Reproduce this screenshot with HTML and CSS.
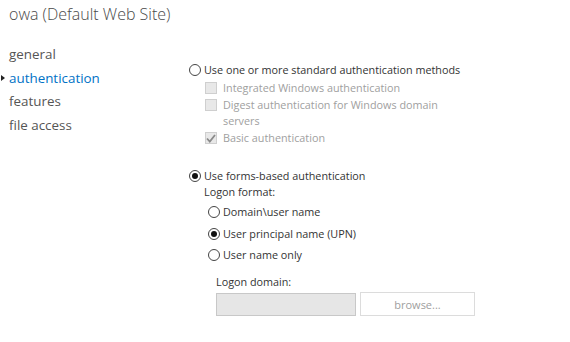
FILE: index.html
```html
<!DOCTYPE html>
<html lang="en">
<head>
    <meta charset="UTF-8">
    <title>owa (Default Web Site)</title>
    <link rel="stylesheet" href="styles.css">
</head>
<body>
    <h1 class="title">owa (Default Web Site)</h1>
    <main class="page">
        <nav class="menu">
            <a class="menu-item">general</a>
            <a class="menu-item menu-item--active">authentication</a>
            <a class="menu-item">features</a>
            <a class="menu-item">file access</a>
        </nav>
        <section class="auth">
            <div class="option">
                <span class="radio"></span>
                <span>Use one or more standard authentication methods</span>
            </div>
            <div class="checks">
                <div class="check-row">
                    <span class="box"></span>
                    <span>Integrated Windows authentication</span>
                </div>
                <div class="check-row">
                    <span class="box"></span>
                    <span>Digest authentication for Windows domain<br>servers</span>
                </div>
                <div class="check-row">
                    <span class="box box--checked">
                        <svg width="10" height="9" viewBox="0 0 10 9"><path d="M1 4.5 L3.8 7.5 L9 1" fill="none" stroke="#8a8a8a" stroke-width="1.8"/></svg>
                    </span>
                    <span>Basic authentication</span>
                </div>
            </div>

            <div class="option option--forms">
                <span class="radio radio--on"></span>
                <span>Use forms-based authentication</span>
            </div>
            <div class="forms">
                <p class="label">Logon format:</p>
                <div class="format-list">
                    <div class="option">
                        <span class="radio"></span>
                        <span>Domain\user name</span>
                    </div>
                    <div class="option">
                        <span class="radio radio--on"></span>
                        <span>User principal name (UPN)</span>
                    </div>
                    <div class="option">
                        <span class="radio"></span>
                        <span>User name only</span>
                    </div>
                </div>
                <div class="domain">
                    <p class="label">Logon domain:</p>
                    <div class="domain-row">
                        <input class="domain-input" type="text" disabled>
                        <button class="browse" disabled>browse...</button>
                    </div>
                </div>
            </div>
        </section>
    </main>
</body>
</html>
```

FILE: styles.css
```css
body{
    margin:0;
    background-color: #fff;
    font-family: "Open Sans", "Noto Sans", sans-serif;
    color: #333;
}
.title{
    margin: 0;
    padding: 2px 0 0 9px;
    font-size: 16px;
    font-weight: 300;
    color: #4a4a4a;
    line-height: 24px;
}
.page{
    display: flex;
    margin-top: 17px;
}
.menu{
    display: flex;
    flex-direction: column;
    width: 189px;
    padding-left: 9px;
    box-sizing: border-box;
}
.menu-item{
    font-size: 13.4px;
    line-height: 23.6px;
    color: #555;
    position: relative;
}
.menu-item--active{
    color: #0072c6;
}
.menu-item--active::before{
    content: "";
    position: absolute;
    left: -8px;
    top: 8px;
    border-left: 4px solid #222;
    border-top: 3.5px solid transparent;
    border-bottom: 3.5px solid transparent;
}
.auth{
    padding-top: 19px;
    font-size: 10.8px;
}
.option{
    display: flex;
    align-items: center;
    gap: 3px;
    line-height: 16px;
}
.radio{
    width: 10px;
    height: 10px;
    border: 1px solid #444;
    border-radius: 50%;
    display: inline-flex;
    align-items: center;
    justify-content: center;
    flex: none;
}
.radio--on::after{
    content: "";
    width: 6px;
    height: 6px;
    border-radius: 50%;
    background-color: #111;
}
.checks{
    padding: 2px 0 0 16px;
    color: #a0a0a0;
}
.check-row{
    display: flex;
    align-items: flex-start;
    gap: 6px;
    line-height: 16px;
    margin-bottom: 1px;
}
.box{
    width: 10px;
    height: 10px;
    margin-top: 2px;
    border: 1px solid #cfcfcf;
    background-color: #e8e8e8;
    flex: none;
    display: inline-flex;
    align-items: center;
    justify-content: center;
}
.option--forms{
    margin-top: 22px;
}
.forms{
    padding-left: 15px;
}
.label{
    margin: 0;
    line-height: 16px;
}
.format-list{
    display: flex;
    flex-direction: column;
    gap: 5.5px;
    padding: 4px 0 0 4px;
}
.domain{
    padding: 11px 0 0 12px;
}
.domain-row{
    display: flex;
    gap: 4px;
    margin-top: 2px;
}
.domain-input{
    width: 140px;
    height: 23px;
    box-sizing: border-box;
    border: 1px solid #c8c8c8;
    background-color: #e6e6e6;
    margin: 1px 0 0 0;
}
.browse{
    width: 115px;
    height: 24px;
    border: 1px solid #dcdcdc;
    background-color: #fff;
    color: #a0a0a0;
    font-family: "Open Sans", "Noto Sans", sans-serif;
    font-size: 11px;
    padding: 0;
}
```
